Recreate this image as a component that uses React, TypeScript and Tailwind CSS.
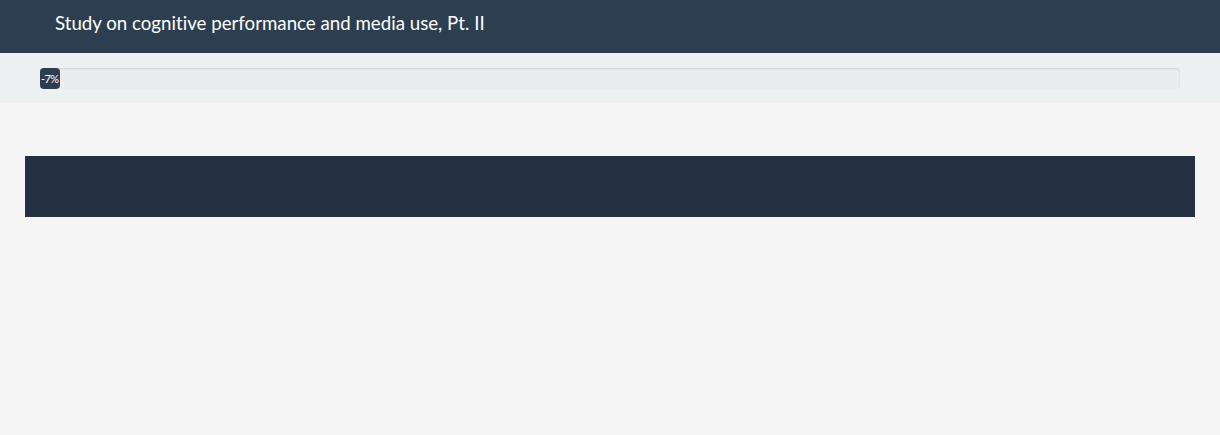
export default function App() {
  return (
    <div className="min-h-[435px] bg-[#f5f5f5] font-['Lato',sans-serif] [font-variant-ligatures:none]">
      <header className="h-[53px] bg-[#2c3e50] pl-[55px] pt-[12px]">
        <h1 className="text-[18.7px] text-white leading-[22px]">Study on cognitive performance and media use, Pt. II</h1>
      </header>

      <div className="h-[50px] bg-[#ecf0f1] px-[40px] pt-[15px]">
        <div className="h-[21px] rounded-[4px] bg-[#e9eded] shadow-[inset_0_1px_2px_rgba(0,0,0,0.12)] overflow-visible">
          <div className="h-[21px] w-[20px] rounded-[4px] bg-[#2c3e50] flex items-center justify-start pl-[1px] overflow-visible whitespace-nowrap">
            <span className="text-[11px] text-white leading-none tracking-[-0.6px]">-7%</span>
          </div>
        </div>
      </div>

      <main className="px-[25px] pt-[53px]">
        <div className="h-[61px] bg-[#253142]" />
      </main>
    </div>
  );
}
